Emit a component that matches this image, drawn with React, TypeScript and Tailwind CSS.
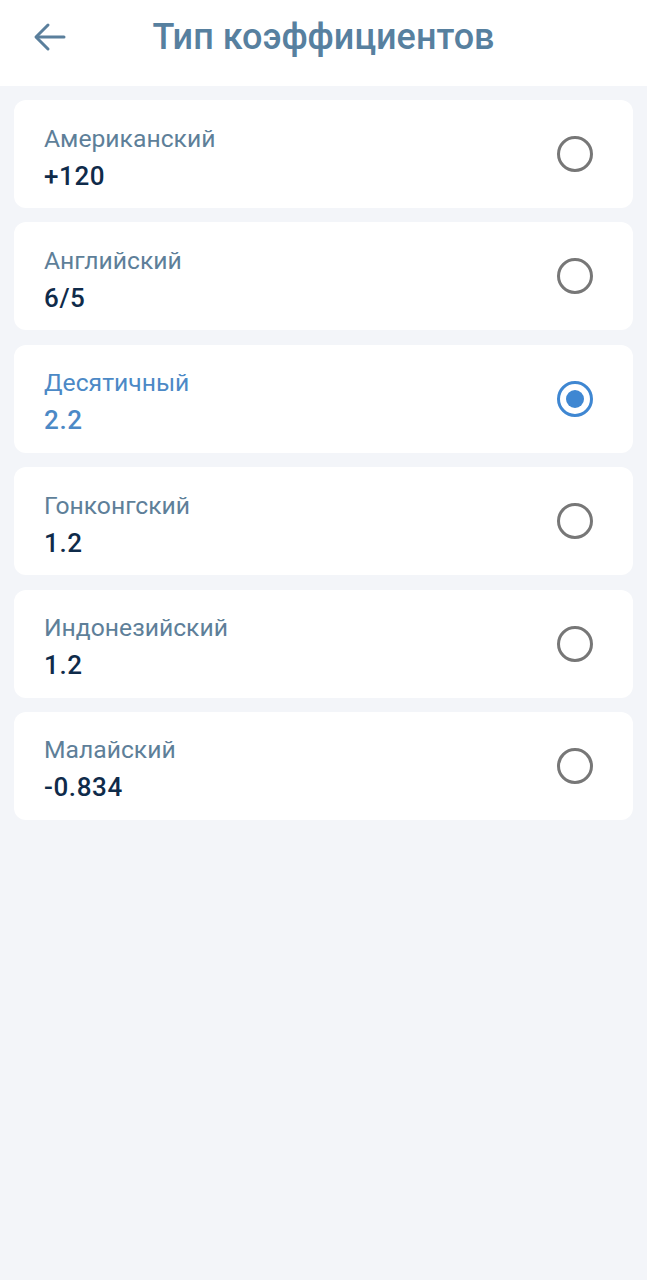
import React, { useState } from 'react';

type OddsType = {
  id: string;
  name: string;
  example: string;
};

const oddsTypes: OddsType[] = [
  { id: 'american', name: 'Американский', example: '+120' },
  { id: 'english', name: 'Английский', example: '6/5' },
  { id: 'decimal', name: 'Десятичный', example: '2.2' },
  { id: 'hongkong', name: 'Гонконгский', example: '1.2' },
  { id: 'indonesian', name: 'Индонезийский', example: '1.2' },
  { id: 'malay', name: 'Малайский', example: '-0.834' },
];

const Radio: React.FC<{ checked: boolean }> = ({ checked }) => (
  <div
    className={`w-[36px] h-[36px] rounded-full border-[3px] flex items-center justify-center ${
      checked ? 'border-[#3f87d2]' : 'border-[#777777]'
    }`}
  >
    {checked && <div className="w-[18px] h-[18px] rounded-full bg-[#3f87d2]" />}
  </div>
);

const App: React.FC = () => {
  const [selected, setSelected] = useState<string>('decimal');

  return (
    <div className="min-h-screen bg-[#f3f5f9] font-['Roboto',sans-serif]">
      <header className="h-[86px] bg-white flex items-center relative">
        <button className="absolute left-[33px] top-[22px] text-[#5a7f9c]">
          <svg width="34" height="30" viewBox="0 0 34 30" fill="none" stroke="currentColor" strokeWidth="3" strokeLinecap="round" strokeLinejoin="round">
            <path d="M31 15H4" />
            <path d="M15 3L3 15l12 12" />
          </svg>
        </button>
        <h1 className="w-full text-center text-[36px] font-medium text-[#57809f] leading-none pb-[12px]">
          Тип коэффициентов
        </h1>
      </header>

      <div className="px-[14px] pt-[14px] flex flex-col gap-[14.4px]">
        {oddsTypes.map((item) => {
          const checked = item.id === selected;
          return (
            <div
              key={item.id}
              onClick={() => setSelected(item.id)}
              className="h-[108px] bg-white rounded-[12px] flex items-center justify-between pl-[30px] pr-[40px] cursor-pointer"
            >
              <div className="pt-[7px]">
                <div className={`text-[24.7px] leading-[30px] ${checked ? 'text-[#4c89c6]' : 'text-[#5e7f99]'}`}>
                  {item.name}
                </div>
                <div
                  className={`text-[26px] leading-[32px] mt-[6px] font-medium tracking-[0.6px] ${
                    checked ? 'text-[#4c89c6]' : 'text-[#0f2b4a]'
                  }`}
                >
                  {item.example}
                </div>
              </div>
              <Radio checked={checked} />
            </div>
          );
        })}
      </div>
    </div>
  );
};

export default App;
